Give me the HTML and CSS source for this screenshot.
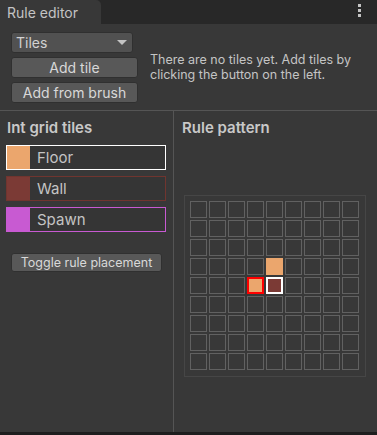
FILE: index.html
```html
<!DOCTYPE html>
<html>
  <head>
    <title>Rule editor</title>
    <meta name="viewport" content="width=device-width, initial-scale=1" />
    <link rel="stylesheet" href="styles.css">
  </head>
  <body>
    <div class="window">
      <div class="tabbar">
        <div class="tab">Rule editor</div>
        <div class="menu"><span></span><span></span><span></span></div>
      </div>
      <div class="toolbar">
        <div class="tool-buttons">
          <div class="dropdown">
            <span>Tiles</span>
            <span class="arrow"></span>
          </div>
          <button class="btn">Add tile</button>
          <button class="btn">Add from brush</button>
        </div>
        <p class="hint">There are no tiles yet. Add tiles by clicking the button on the left.</p>
      </div>
      <div class="split">
        <div class="tiles-panel">
          <h2>Int grid tiles</h2>
          <div class="tile-list">
            <div class="tile tile-floor selected"><span class="swatch"></span>Floor</div>
            <div class="tile tile-wall"><span class="swatch"></span>Wall</div>
            <div class="tile tile-spawn"><span class="swatch"></span>Spawn</div>
          </div>
          <button class="btn btn-small">Toggle rule placement</button>
        </div>
        <div class="pattern-panel">
          <h2>Rule pattern</h2>
          <div class="pattern-box">
            <div class="pattern" id="pattern"></div>
          </div>
        </div>
      </div>
      <div class="statusbar"></div>
    </div>
    <script type="text/javascript">
      var pattern = document.getElementById('pattern');
      var marked = { '3,4': 'floor', '4,3': 'floor red', '4,4': 'wall white' };
      for (var r = 0; r < 9; r++) {
        for (var c = 0; c < 9; c++) {
          var cell = document.createElement('div');
          cell.className = 'cell';
          var m = marked[r + ',' + c];
          if (m) {
            m.split(' ').forEach(function(k){ cell.classList.add('cell-' + k); });
          }
          pattern.appendChild(cell);
        }
      }
    </script>
  </body>
</html>
```

FILE: styles.css
```css
*{
  box-sizing:border-box;
}
body{
  margin:0;
  padding:0;
  background-color:#383838;
  font-family: Inter, "Noto Sans", sans-serif;
  color:#d2d2d2;
}
.window{
  width:377px;
  height:435px;
  display:flex;
  flex-direction:column;
  background-color:#383838;
}
.tabbar{
  height:24px;
  flex-shrink:0;
  background-color:#282828;
  display:flex;
  align-items:stretch;
  justify-content:space-between;
}
.tab{
  width:101px;
  background-color:#383838;
  border-top-right-radius:5px;
  padding-left:7px;
  font-size:14px;
  line-height:25px;
  color:#c4c4c4;
}
.menu{
  width:36px;
  display:flex;
  flex-direction:column;
  align-items:center;
  padding-top:4px;
  gap:2px;
}
.menu span{
  width:3px;
  height:3px;
  background-color:#c4c4c4;
}
.toolbar{
  height:87px;
  flex-shrink:0;
  display:flex;
  align-items:center;
  padding:0 0 0 11px;
  gap:12px;
  border-bottom:1px solid #555;
}
.tool-buttons{
  width:127px;
  display:flex;
  flex-direction:column;
  gap:4px;
  padding-top:1px;
}
.dropdown{
  width:122px;
  height:21px;
  background-color:#515151;
  border:1px solid #303030;
  border-radius:3px;
  display:flex;
  align-items:center;
  justify-content:space-between;
  padding:0 5px 0 4px;
  font-size:14px;
  color:#d2d2d2;
}
.arrow{
  width:0;
  height:0;
  border-left:5px solid transparent;
  border-right:5px solid transparent;
  border-top:5px solid #c4c4c4;
}
.btn{
  height:21px;
  background-color:#585858;
  border:1px solid #303030;
  border-radius:3px;
  font-family: Inter, "Noto Sans", sans-serif;
  font-size:14px;
  color:#d8d8d8;
  padding:0;
}
.hint{
  margin:0;
  font-size:12.5px;
  line-height:15px;
  color:#c4c4c4;
  width:220px;
}
.split{
  flex-grow:1;
  display:flex;
}
.tiles-panel{
  width:174px;
  border-right:1px solid #555;
  padding:8px 7px 0 6px;
}
h2{
  margin:0 0 0 1px;
  font-size:15px;
  font-weight:600;
  line-height:17px;
  color:#c8c8c8;
}
.tile-list{
  margin-top:9px;
  display:flex;
  flex-direction:column;
  gap:6px;
}
.tile{
  height:25px;
  display:flex;
  align-items:center;
  font-size:15px;
  color:#c4c4c4;
  background-color:#353535;
}
.swatch{
  width:23px;
  align-self:stretch;
  margin-right:7px;
}
.tile-floor{ border:1px solid #ffffff; }
.tile-floor .swatch{ background-color:#eba66d; }
.tile-wall{ border:1px solid #70352f; }
.tile-wall .swatch{ background-color:#7b3a35; }
.tile-spawn{ border:1px solid #c85ad2; }
.tile-spawn .swatch{ background-color:#c85ad2; }
.btn-small{
  margin:21px 0 0 5px;
  width:151px;
  height:19px;
  font-size:12.5px;
  background-color:#585858;
}
.pattern-panel{
  flex-grow:1;
  padding:8px 0 0 7px;
}
.pattern-box{
  margin:59px 0 0 3px;
  width:182px;
  height:182px;
  border:1px solid #464646;
  padding:5px;
}
.pattern{
  display:grid;
  grid-template-columns:repeat(9, 17px);
  grid-auto-rows:17px;
  gap:2px;
}
.cell{
  border:1px solid #616161;
}
.cell-floor{ background-color:#eba66d; border-color:#eba66d; }
.cell-wall{ background-color:#7b3a35; }
.cell-red{ border:2px solid #ff0000; }
.cell-white{ border:2px solid #ffffff; }
.statusbar{
  height:3px;
  flex-shrink:0;
  background-color:#1e1e1e;
}
```
